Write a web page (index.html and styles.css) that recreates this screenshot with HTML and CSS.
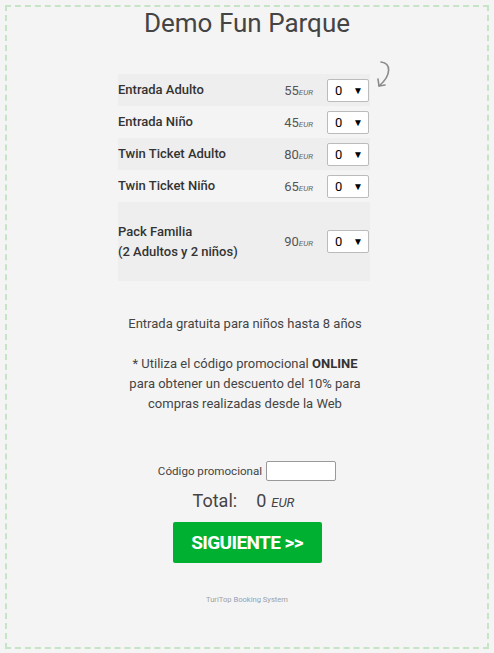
FILE: index.html
```html
<!DOCTYPE html>
<html lang="es">
<head>
<meta charset="utf-8">
<title>Demo Fun Parque</title>
<link rel="stylesheet" href="styles.css">
</head>
<body>
<div class="frame">
  <h1 class="title">Demo Fun Parque</h1>
  <div class="tickets">
    <svg class="hint" width="24" height="32" viewBox="0 0 24 32" aria-hidden="true">
      <path d="M8 3 C18 4 19 16 6 27" fill="none" stroke="#8a8a8a" stroke-width="1.6" stroke-linecap="round"/>
      <path d="M5 20 L6 27 L12 26" fill="none" stroke="#8a8a8a" stroke-width="1.6" stroke-linecap="round" stroke-linejoin="round"/>
    </svg>
    <div class="row odd">
      <div class="name">Entrada Adulto</div>
      <div class="price">55<span class="cur">EUR</span></div>
      <div class="sel"><span>0</span><span class="arr">▼</span></div>
    </div>
    <div class="row">
      <div class="name">Entrada Niño</div>
      <div class="price">45<span class="cur">EUR</span></div>
      <div class="sel"><span>0</span><span class="arr">▼</span></div>
    </div>
    <div class="row odd">
      <div class="name">Twin Ticket Adulto</div>
      <div class="price">80<span class="cur">EUR</span></div>
      <div class="sel"><span>0</span><span class="arr">▼</span></div>
    </div>
    <div class="row">
      <div class="name">Twin Ticket Niño</div>
      <div class="price">65<span class="cur">EUR</span></div>
      <div class="sel"><span>0</span><span class="arr">▼</span></div>
    </div>
    <div class="row odd tall">
      <div class="name">Pack Familia<br>(2 Adultos y 2 niños)</div>
      <div class="price">90<span class="cur">EUR</span></div>
      <div class="sel"><span>0</span><span class="arr">▼</span></div>
    </div>
  </div>

  <p class="note">Entrada gratuita para niños hasta 8 años</p>
  <p class="note promo">* Utiliza el código promocional <b>ONLINE</b><br>para obtener un descuento del 10% para<br>compras realizadas desde la Web</p>

  <div class="code">
    <label class="code-label" for="code">Código promocional</label>
    <input class="code-input" id="code" type="text">
  </div>
  <div class="total">
    <span class="total-label">Total:</span>
    <span class="total-value">0</span>
    <span class="total-cur">EUR</span>
  </div>
  <div class="actions">
    <button class="next" type="button">SIGUIENTE &gt;&gt;</button>
  </div>
  <div class="footer">TuriTop <span class="brand">Booking</span> System</div>
</div>
</body>
</html>
```
FILE: styles.css
```css
html, body {
  margin: 0;
  padding: 0;
  background: #f4f4f4;
}
body {
  font-family: Roboto, "Liberation Sans", Arial, sans-serif;
  color: #444;
}
.frame {
  margin: 5px;
  height: 644px;
  box-sizing: border-box;
  border: 2px dashed #c6e4c6;
}
.title {
  margin: 1px 0 0;
  font-size: 26px;
  line-height: 30px;
  font-weight: 400;
  text-align: center;
  color: #444;
}
.tickets {
  position: relative;
  width: 252px;
  margin: 36px 117px 0 111px;
}
.hint {
  position: absolute;
  right: -27px;
  top: -15px;
}
.row {
  display: flex;
  align-items: center;
  height: 32px;
}
.row.odd {
  background: #eeeeee;
}
.row.tall {
  height: 79px;
}
.name {
  flex: 1;
  font-size: 13px;
  font-weight: 500;
  line-height: 20px;
  color: #333;
}
.price {
  font-size: 13px;
  color: #555;
  margin-right: 14px;
}
.cur {
  font-size: 8px;
  font-style: italic;
  color: #666;
}
.sel {
  width: 42px;
  height: 23px;
  box-sizing: border-box;
  margin-right: 1px;
  border: 1px solid #bbb;
  border-radius: 2px;
  background: #fff;
  display: flex;
  align-items: center;
  justify-content: space-between;
  padding: 0 5px 0 7px;
  font-size: 13px;
  color: #000;
}
.arr {
  font-size: 10px;
}
.note {
  margin: 33px 0 0;
  padding-right: 4px;
  font-size: 13px;
  line-height: 20px;
  text-align: center;
  color: #444;
}
.note.promo {
  margin-top: 20px;
}
.note b {
  font-weight: 700;
  color: #333;
}
.code {
  display: flex;
  justify-content: center;
  align-items: center;
  gap: 4px;
  margin-top: 47px;
}
.code-label {
  font-size: 11.6px;
  color: #444;
}
.code-input {
  width: 70px;
  height: 20px;
  box-sizing: border-box;
  margin: 0;
  border: 1px solid #999;
  border-radius: 2px;
  background: #fff;
  padding: 0 3px;
}
.total {
  display: flex;
  justify-content: center;
  align-items: baseline;
  margin-top: 8px;
  padding-right: 7px;
  height: 24px;
  line-height: 24px;
  color: #444;
}
.total-label {
  font-size: 18px;
}
.total-value {
  font-size: 18px;
  margin-left: 19px;
}
.total-cur {
  font-size: 13px;
  font-style: italic;
  margin-left: 5px;
}
.actions {
  display: flex;
  justify-content: center;
  margin-top: 9px;
}
.next {
  width: 149px;
  height: 41px;
  border: none;
  border-radius: 2px;
  background: #00b131;
  color: #fff;
  font-family: Roboto, "Liberation Sans", Arial, sans-serif;
  font-size: 19px;
  font-weight: 700;
  letter-spacing: -0.6px;
  padding: 0;
}
.footer {
  margin-top: 32px;
  font-size: 7.6px;
  line-height: 10px;
  text-align: center;
  color: #a0a0a0;
}
.brand {
  color: #8fa3c4;
}
```
